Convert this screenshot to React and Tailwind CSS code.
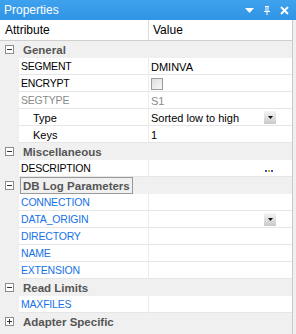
const Toggle = ({ open }) => (
  <span className="relative flex h-[9px] w-[9px] items-center justify-center border border-[#8c8c8c] bg-white">
    <span className="h-px w-[5px] bg-[#333]"></span>
    {!open && <span className="absolute h-[5px] w-px bg-[#333]"></span>}
  </span>
);

const Category = ({ label, open = true, focus = false }) => (
  <div className="flex h-[17px] items-center bg-[#f0f0f0]">
    <div className="flex w-[19px] justify-center">
      <Toggle open={open} />
    </div>
    <span
      className={
        "ml-px px-[2px] pt-px text-[11.5px] font-bold leading-[14px] text-[#555] " +
        (focus ? "border border-[#9a9a9a]" : "border border-transparent")
      }
    >
      {label}
    </span>
  </div>
);

const DropButton = () => (
  <span className="flex h-[13px] w-[12px] items-center justify-center bg-gradient-to-b from-[#f6f6f6] to-[#c9c9c9]">
    <svg width="5" height="3" viewBox="0 0 5 3">
      <path d="M0 0h5L2.5 3z" fill="#111" />
    </svg>
  </span>
);

const Item = ({ name, value, tone = "black", indent = false, extra }) => {
  const color =
    tone === "blue" ? "text-[#1672e6]" : tone === "gray" ? "text-[#8a8a8a]" : "text-black";
  return (
    <div className="flex h-[17px] bg-[#f0f0f0]">
      <div className="w-[19px] shrink-0"></div>
      <div className="grid flex-1 grid-cols-[130px_1fr] border-b border-[#e6e6e6] bg-white">
        <div
          className={
            "flex items-center border-r border-[#ececec] pt-px text-[10.5px] tracking-[-0.2px] " +
            color +
            (indent ? " pl-[14px] text-[11px] tracking-normal" : " pl-[2px]")
          }
        >
          {name}
        </div>
        <div className="flex items-center justify-between pl-[2px] pr-[16px]">
          <span className={"pt-px text-[11px] " + (tone === "gray" ? "text-[#8a8a8a]" : "text-black")}>
            {value}
          </span>
          {extra}
        </div>
      </div>
    </div>
  );
};

export default function App() {
  return (
    <div
      className="flex h-[334px] w-[296px] flex-col overflow-hidden bg-[#f0f0f0]"
      style={{ fontFamily: '"Liberation Sans", Arial, sans-serif' }}
    >
      <div className="flex h-[20px] shrink-0 items-center justify-between bg-gradient-to-b from-[#3ea2ee] to-[#3094e6] pl-[4px] pr-[7px] text-white">
        <span className="text-[12px]">Properties</span>
        <div className="flex items-center gap-[9px]">
          <svg width="9" height="5" viewBox="0 0 9 5">
            <path d="M0 0h9L4.5 5z" fill="#fff" />
          </svg>
          <svg width="8" height="9" viewBox="0 0 8 9">
            <path d="M2 0h4v1H5.5v4H7v1H4.5v3h-1V6H1V5h1.5V1H2z M3.5 1v4h1V1z" fill="#fff" />
          </svg>
          <svg width="9" height="9" viewBox="0 0 9 9">
            <path d="M1 1l7 7M8 1L1 8" stroke="#fff" strokeWidth="1.8" />
          </svg>
        </div>
      </div>

      <div className="mr-[3px] flex flex-1 flex-col border-r border-[#c9c9c9]">
        <div className="grid h-[21px] shrink-0 grid-cols-[149px_1fr] border-b border-[#cfcfcf] bg-white text-[12px] text-black">
          <div className="flex items-center border-r border-[#dcdcdc] pl-[5px]">Attribute</div>
          <div className="flex items-center pl-[4px]">Value</div>
        </div>

        <Category label="General" />
        <Item name="SEGMENT" value="DMINVA" />
        <Item
          name="ENCRYPT"
          value={
            <span className="block h-[12px] w-[12px] border border-[#9c9c9c] bg-gradient-to-br from-[#dedede] to-[#f7f7f7]"></span>
          }
        />
        <Item name="SEGTYPE" value="S1" tone="gray" />
        <Item name="Type" value="Sorted low to high" indent extra={<DropButton />} />
        <Item name="Keys" value="1" indent />
        <Category label="Miscellaneous" />
        <Item
          name="DESCRIPTION"
          value=""
          extra={
            <span className="flex h-[15px] w-[14px] items-end justify-center gap-[1px] bg-white pb-[4px]">
              <span className="h-[2px] w-[2px] bg-[#2a5db0]"></span>
              <span className="h-[2px] w-[2px] bg-[#d8a21c]"></span>
              <span className="h-[2px] w-[2px] bg-[#2a5db0]"></span>
            </span>
          }
        />
        <Category label="DB Log Parameters" focus />
        <Item name="CONNECTION" value="" tone="blue" />
        <Item name="DATA_ORIGIN" value="" tone="blue" extra={<DropButton />} />
        <Item name="DIRECTORY" value="" tone="blue" />
        <Item name="NAME" value="" tone="blue" />
        <Item name="EXTENSION" value="" tone="blue" />
        <Category label="Read Limits" />
        <Item name="MAXFILES" value="" tone="blue" />
        <Category label="Adapter Specific" open={false} />
      </div>
    </div>
  );
}
